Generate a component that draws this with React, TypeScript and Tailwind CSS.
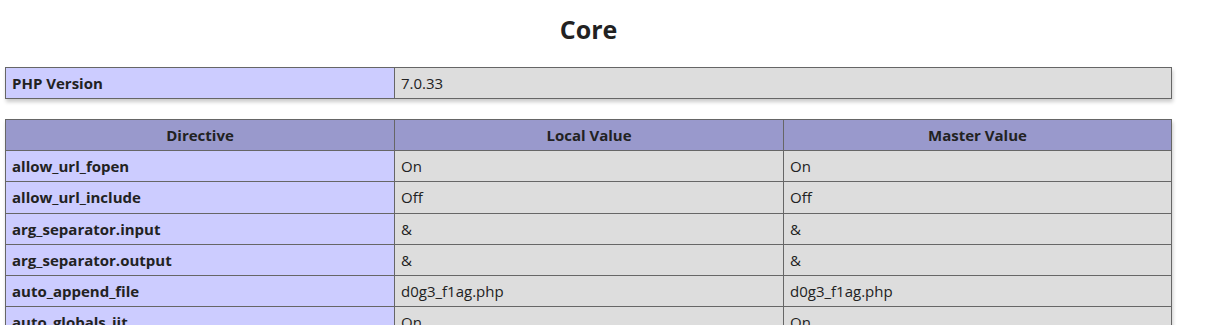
import React from "react";

const rows: [string, string, string][] = [
  ["allow_url_fopen", "On", "On"],
  ["allow_url_include", "Off", "Off"],
  ["arg_separator.input", "&", "&"],
  ["arg_separator.output", "&", "&"],
  ["auto_append_file", "d0g3_f1ag.php", "d0g3_f1ag.php"],
  ["auto_globals_jit", "On", "On"],
  ["auto_prepend_file", "no value", "no value"],
];

const cell = "border border-[#666] px-[6px] h-[31.25px] p-0 align-middle text-left";

export default function App() {
  return (
    <div
      className="bg-white text-[#222] w-[1217px] h-[325px] overflow-hidden"
      style={{ fontFamily: '"Open Sans", "Noto Sans", sans-serif' }}
    >
      <h2 className="text-[25px] font-bold text-center w-[1167px] ml-[5px] pt-[12px] leading-[34px] h-[54px]">
        Core
      </h2>
      <table className="border-collapse w-[1167px] ml-[5px] mt-[12.5px] text-[15px] leading-[20px] shadow-[1.25px_2.5px_3.75px_#ccc] table-fixed">
        <tbody>
          <tr>
            <td className={`${cell} w-[389px] bg-[#ccf] font-bold`}>PHP Version</td>
            <td className={`${cell} bg-[#ddd]`}>7.0.33</td>
          </tr>
        </tbody>
      </table>
      <table className="border-collapse w-[1167px] ml-[5px] mt-[20px] text-[15px] leading-[20px] shadow-[1.25px_2.5px_3.75px_#ccc] table-fixed">
        <tbody>
          <tr>
            <th className={`${cell} w-[389px] bg-[#99c] font-bold !text-center`}>Directive</th>
            <th className={`${cell} w-[389px] bg-[#99c] font-bold !text-center`}>Local Value</th>
            <th className={`${cell} bg-[#99c] font-bold !text-center`}>Master Value</th>
          </tr>
          {rows.map((r) => (
            <tr key={r[0]}>
              <td className={`${cell} bg-[#ccf] font-bold`}>{r[0]}</td>
              <td className={`${cell} bg-[#ddd]`}>{r[1]}</td>
              <td className={`${cell} bg-[#ddd]`}>{r[2]}</td>
            </tr>
          ))}
        </tbody>
      </table>
    </div>
  );
}
